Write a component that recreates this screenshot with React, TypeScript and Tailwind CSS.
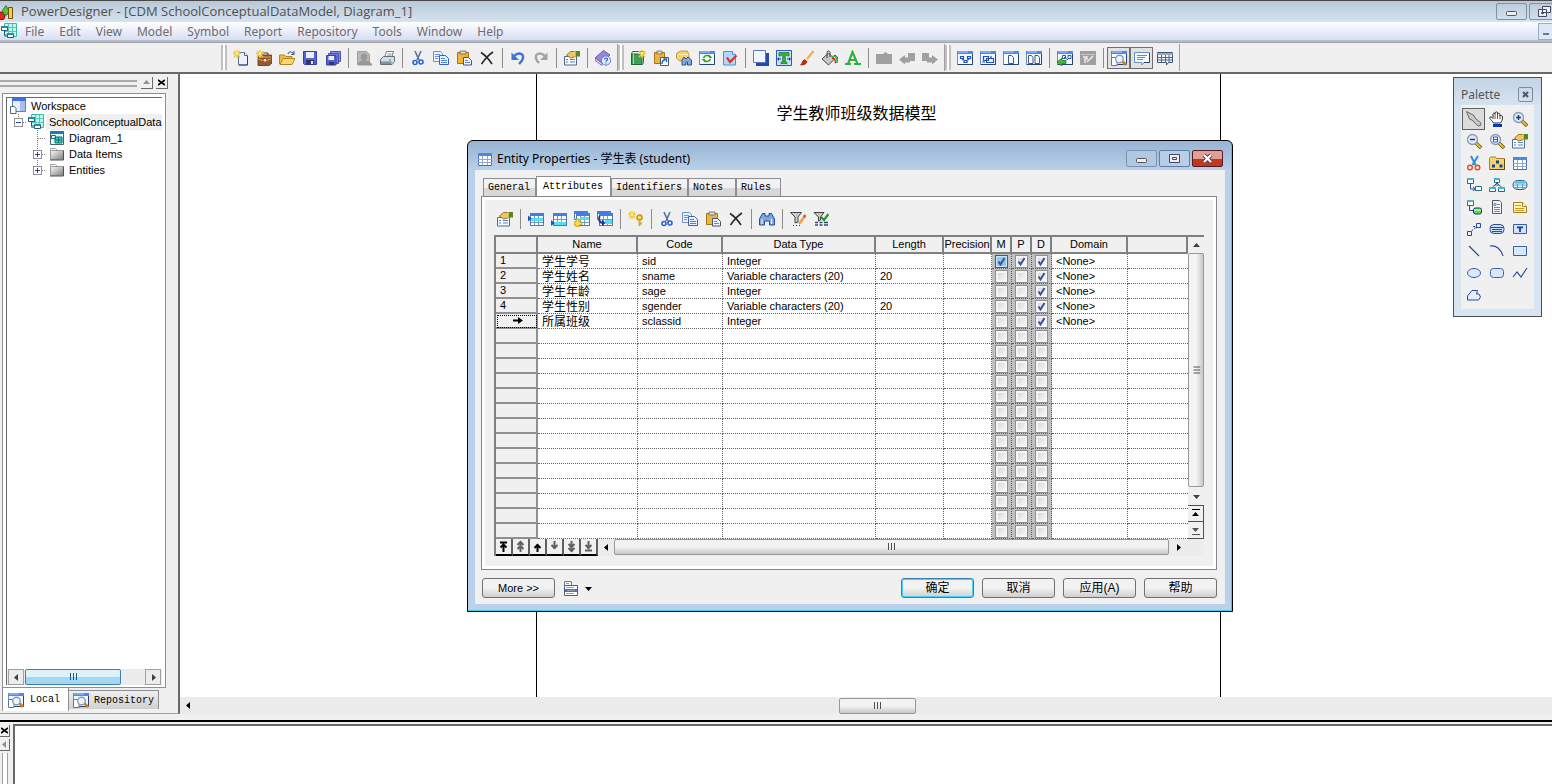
import { useState } from "react"
import type { ReactNode } from "react"

/* ---------- icons, all drawn on a 16 x 16 grid ---------- */

const spark = (
  <>
    <path d="M0 3.500h8M4 0v8M1 1l6 6M7 1L1 7" stroke="#f0cc38" strokeWidth="1.500" fill="none" />
    <path d="M3 2.500h2v2H3z" fill="#fff8c0" />
  </>
)
const win = (
  <>
    <rect x="0.5" y="1.5" width="15" height="13" fill="#f4f8ff" stroke="#6c8cc0" />
    <path d="M0 1h16v3H0z" fill="#4a8af0" />
    <path d="M1 2h10" stroke="#a8ccff" />
    <path d="M15.5 4v10.500H1" stroke="#26466e" fill="none" />
  </>
)
const grid = (
  <>
    <rect x="2.5" y="2.5" width="13" height="12" fill="#fff" stroke="#5576a8" />
    <path d="M2 2h14v3H2z" fill="#3f7fe0" />
    <path d="M3 8.5h12M3 11.5h12M6.5 5v9M10.5 5v9" stroke="#7d95b8" />
  </>
)
const lens = (
  <>
    <path d="M10 10l5 5" stroke="#5c4a10" strokeWidth="3.4" />
    <path d="M10 10l4.6 4.6" stroke="#f0c438" strokeWidth="2" />
    <circle cx="6.5" cy="6.5" r="5" fill="#dceafc" stroke="#8c98ac" strokeWidth="1.3" />
  </>
)
const page = (
  <>
    <path d="M5.5 2.5h6l3 3v9.500h-9z" fill="#eaf2ff" stroke="#5a74a0" />
    <path d="M11.5 2.5v3h3" stroke="#4a648c" fill="#fff" />
    <path d="M14.500 6v9H6" stroke="#2c4468" fill="none" />
  </>
)

const icons: Record<string, ReactNode> = {
  newFile: <>{page}{spark}</>,
  newProject: (
    <>
      <path d="M2 5h13.500l.5 8-3 2.500H2z" fill="#94592e" stroke="#5e3214" strokeWidth=".8" />
      <path d="M3 6h12v2H3z" fill="#b87848" />
      <path d="M2 9c4 2 9 2 13 0" stroke="#d8a070" fill="none" />
      <path d="M7 5V3h5v2" stroke="#5e3214" fill="none" />
      <path d="M8 9h2v2.500H8z" fill="#f8e0a8" />
      {spark}
    </>
  ),
  open: (
    <>
      <path d="M.5 14V5h5L7 6.500h6V9" fill="#f0b840" stroke="#b88420" />
      <path d="M1 14.500L4 8.500h12l-3 6z" fill="#ffd870" stroke="#b88420" />
      <path d="M9 4c1-3 4-3 5.500 0M12 4.500h3V1" stroke="#4a6c98" strokeWidth="1.200" fill="none" />
    </>
  ),
  save: (
    <>
      <path d="M1.500 1.500h13v13h-12l-1-1z" fill="#5a62d8" stroke="#3840a8" />
      <path d="M4 2h8v6H4z" fill="#e8f0ff" />
      <path d="M4 10h8v4.500H4z" fill="#30386a" />
      <path d="M9 11h2v3H9z" fill="#e8ecff" />
    </>
  ),
  saveAll: (
    <>
      <path d="M5.500 1.500h10v10h-10z" fill="#8a90e0" stroke="#4850b0" />
      <path d="M3.500 3.500h10v10h-10z" fill="#7078d8" stroke="#4850b0" />
      <path d="M1.500 5.500h9.500v9.500H1.500z" fill="#5a62d0" stroke="#3840a8" />
      <path d="M3.500 6h5.500v4H3.500z" fill="#e8f0ff" />
      <path d="M4 12h5v3H4z" fill="#30386a" />
    </>
  ),
  preview: (
    <>
      <path d="M1.500 1.500h9l3 3V14.500h-12z" fill="#b8b8b8" stroke="#a0a0a0" />
      <circle cx="8" cy="7" r="3.300" fill="#989898" />
      <path d="M2 14c1-3 4-4 6-4s5 1 8 4v1.500H2z" fill="#989898" />
    </>
  ),
  print: (
    <>
      <path d="M5.500 7.500l2-6h7l-2 6z" fill="#fff" stroke="#6a8098" />
      <path d="M8.500 4h4M8 6h4" stroke="#88a" />
      <path d="M1.500 9.500l3-3h11v5l-2.500 3H1.500z" fill="#d4dce4" stroke="#607080" />
      <path d="M2 11.500h10.500v2.500H2z" fill="#8090a8" />
      <path d="M10 9.500h2v1h-2z" fill="#30a030" />
    </>
  ),
  cut: (
    <>
      <path d="M5 1l4 9M11 1L7 10" stroke="#5c7498" strokeWidth="1.600" />
      <circle cx="5" cy="12.500" r="2" fill="none" stroke="#2860e0" strokeWidth="1.600" />
      <circle cx="11" cy="12" r="2" fill="none" stroke="#2860e0" strokeWidth="1.600" />
    </>
  ),
  copy: (
    <>
      <path d="M.5 1.500h7l2 2v8h-9z" fill="#eaf2ff" stroke="#6c90d0" />
      <path d="M2 4.500h5M2 6.500h6M2 8.500h3" stroke="#6c94e0" />
      <path d="M6.500 5.500h6l3 3v6h-9z" fill="#eaf2ff" stroke="#3a62b8" />
      <path d="M8 8.500h4M8 10.500h6M8 12.500h6" stroke="#5080e0" />
    </>
  ),
  paste: (
    <>
      <path d="M1.500 2.500h11v11h-11z" fill="#f0b438" stroke="#a87018" />
      <path d="M4 1h6v3H4z" fill="#d8d8d8" stroke="#686868" strokeWidth=".8" />
      <path d="M7.500 7.500h5l3 3v4.500h-8z" fill="#eef4ff" stroke="#40587c" />
      <path d="M9 10.500h3M9 12.500h5" stroke="#6888b8" />
    </>
  ),
  del: <path d="M2 2.500c5 3 8 7 11 11.500M14 2C9 5 6 9 2.500 14" stroke="#282828" strokeWidth="1.600" fill="none" />,
  undo: (
    <>
      <path d="M4 6c4-4 10-3 9 2-.5 3-3 5-4 6" stroke="#3c74d8" strokeWidth="2.400" fill="none" />
      <path d="M1.500 2.500v7.500H9z" fill="#3c74d8" />
    </>
  ),
  redo: (
    <>
      <path d="M12 6C8 2 2 3 3 8c.5 3 2 4 3 5" stroke="#a4a4a4" strokeWidth="2.400" fill="none" />
      <path d="M14.500 2.500V10H7z" fill="#a4a4a4" />
    </>
  ),
  props: (
    <>
      <path d="M.5 6.500h12v8.500H.5z" fill="#f6faff" stroke="#506c94" />
      <path d="M2 9.500h2M2 12h2M6 9.500h5M6 12h5" stroke="#5a84c8" />
      <path d="M2.500 5l4-3.500h5.500v5L6.500 8z" fill="#f4c460" stroke="#806010" strokeWidth=".8" />
      <path d="M11.500 1h4.500v5.500h-4.500z" fill="#5a8820" />
      <path d="M11 1v6" stroke="#f0e070" />
    </>
  ),
  help: (
    <>
      <path d="M0 8l8.500-7.500L15 5l-8 8z" fill="#9a86d8" stroke="#6c5cb8" />
      <path d="M0 8l7 5v2.500L0 10.500z" fill="#d8d0f0" stroke="#6450a8" strokeWidth=".7" />
      <circle cx="11" cy="10.500" r="4.600" fill="#e4eeff" stroke="#4a80d8" />
      <path d="M9.500 9.500c0-2 3-2 3 0 0 1-1.500 1-1.500 2M11 12.500v1" stroke="#2858b8" fill="none" strokeWidth="1.200" />
    </>
  ),
  book: (
    <>
      <path d="M1.500 3.500l1-2h11v11l-1 2h-11z" fill="#f0f4f0" stroke="#406048" />
      <path d="M1.500 4h10.500v10.500H1.500z" fill="#40a058" stroke="#206830" />
      <path d="M3.500 4v10" stroke="#a0d8a8" />
      <g transform="translate(8 0)">{spark}</g>
    </>
  ),
  pasteLink: (
    <>
      <path d="M1.500 2.500h10v11h-10z" fill="#f0b438" stroke="#a87018" />
      <path d="M4 1h5v3H4z" fill="#d8d8d8" stroke="#686868" strokeWidth=".8" />
      <path d="M7.500 7.500h8v8h-8z" fill="#fff" stroke="#40587c" />
      <path d="M9 14c0-3 1-4 3-4M10.500 9h3v3" stroke="#2858b8" fill="none" strokeWidth="1.400" />
    </>
  ),
  find: (
    <>
      <path d="M.5 3.500l4-2.500h7l1.500 4v6H3.500l-3-3z" fill="#f8d070" stroke="#b88828" strokeWidth=".8" />
      <path d="M3 4.500h9.500" stroke="#fff0b8" />
      <path d="M6 15V10l2-3 2 2 2-2 3.500 3v5h-4v-3h-1.500v3z" fill="#88a8e0" stroke="#30508c" />
    </>
  ),
  refresh: (
    <>
      {win}
      <path d="M4.500 8c1-3 5-3 6-1.500M11.500 9c-1 3-5 3-6 1.500" stroke="#3c9c18" strokeWidth="1.600" fill="none" />
      <path d="M10 4.500v3.500h3.500zM6 12.500V9H2.500z" fill="#3c9c18" />
    </>
  ),
  check: (
    <>
      <path d="M1.500 1.500h9l3 3v10.500h-12z" fill="#b0d8ff" stroke="#4c90e0" />
      <path d="M10.500 1.500v3h3" fill="#fff" stroke="#4c90e0" />
      <path d="M5 7.500l3 4.500 6.500-6.500" stroke="#d83028" strokeWidth="2.200" fill="none" />
    </>
  ),
  shadow: (
    <>
      <path d="M3 3h13v13H3z" fill="#2848a8" />
      <path d="M.5 .5h12v12H.5z" fill="#f0f6ff" stroke="#5878c0" />
    </>
  ),
  textFit: (
    <>
      <path d="M.5 .5h15v15H.5z" fill="#c8e0fc" stroke="#2858b8" />
      <path d="M3 2.500h10v3.500h-1.500L11 5H9.300v7H11v1.500H5V12h1.700V5H5l-.5 1H3z" fill="#30b838" stroke="#106018" strokeWidth=".6" />
      <path d="M1 9h4M2.500 7.500v3M11 9h4M13.500 7.500v3" stroke="#1840a0" />
    </>
  ),
  brush: (
    <>
      <path d="M14.500 1L8 9" stroke="#f0b040" strokeWidth="2.200" />
      <path d="M1.500 15c2-1 1-4 4-5.500l2.500 2C7 15 4 15 1.500 15z" fill="#d02818" stroke="#701008" strokeWidth=".6" />
    </>
  ),
  fill: (
    <>
      <path d="M0 9l6.500-6 6 6-6 6z" fill="#c8c8c8" stroke="#484848" />
      <path d="M5 8V2.500c0-2 3-2 3 0V7" stroke="#404040" fill="none" />
      <path d="M10 7c3-2 5 0 5 6" stroke="#30c030" strokeWidth="1.400" fill="none" />
      <path d="M10 8.300c2-.5 3.500 1 3.500 5" stroke="#e02020" strokeWidth="1.400" fill="none" />
      <path d="M12 5.500c3-.5 4 2 4 7" stroke="#2040e0" fill="none" />
    </>
  ),
  fontColor: <path d="M0 14h6M9 14h7M3 14L7.500 2 12.500 14M5 10h6" stroke="#30b040" strokeWidth="2.200" fill="none" />,
  greyFolder: <path d="M0 4h7l2.500-2L12 4h4v10H0z" fill="#a0a0a0" />,
  greyLeft: <path d="M0 9.500L6 5v2.500h3V3h7v8h-5v1.500H6v2z" fill="#a0a0a0" />,
  greyRight: <path d="M16 9.500L10 5v2.500H7V3H0v8h5v1.500h5v2z" fill="#a0a0a0" />,
  winLink: (
    <>
      {win}
      <path d="M3.500 6.500h3v2h-3zM10.500 6.500h3v2h-3zM7 10.500h3v2H7zM5 9l3 2M12 9l-3 2" fill="none" stroke="#2050b8" strokeWidth="1.200" />
    </>
  ),
  winGroup: (
    <>
      {win}
      <path d="M3.500 6.500h5v4h-5zM6.500 8.500h7v4h-7zM11 6v2M2 12h3" fill="none" stroke="#2050b8" strokeWidth="1.200" />
    </>
  ),
  winPage: <>{win}<path d="M5.500 5.500h3l2 2v6h-5z" fill="#f4f8ff" stroke="#40587c" /></>,
  winPages: (
    <>
      {win}
      <path d="M2.500 5.500h3l1.500 2v6H2.500zM9 5.500h3l1.500 2v6H9z" fill="#f4f8ff" stroke="#40587c" />
    </>
  ),
  winBack: (
    <>
      {win}
      <path d="M5.500 5.500h3v3h-3zM11 5.500h3v3h-3zM7 7l4 3" fill="none" stroke="#2858b8" />
      <path d="M0 12l5-4v2.500h4v3H5V16z" fill="#40c030" stroke="#187010" strokeWidth=".7" />
    </>
  ),
  greyWin: (
    <>
      <path d="M0 1h16v14H0z" fill="#a0a0a0" />
      <path d="M1 4.500h14" stroke="#c8c8c8" />
      <path d="M3 7h4v2H5v4M13 6l-6 6" stroke="#f0f0f0" strokeWidth="1.400" fill="none" />
    </>
  ),
  browse: (
    <>
      {win}
      <path d="M.5 7.500h4l1.500 2v6H.5z" fill="#fff" stroke="#5878a8" />
      <path d="M11 11l4 4" stroke="#d08020" strokeWidth="2.800" />
      <circle cx="8.500" cy="9" r="3.800" fill="#eef4fc" stroke="#8c9cb4" strokeWidth="1.400" />
    </>
  ),
  output: (
    <>
      <path d="M.5 2.500h15v10H10l-2 2.500v-2.500H.5z" fill="#f4f8ff" stroke="#6c8cc0" />
      <path d="M3 5.500h10M3 7.500h8M3 9.500h6" stroke="#6888c0" />
      <path d="M15.500 3v9.500H10" stroke="#26466e" fill="none" />
    </>
  ),
  results: (
    <>
      <path d="M.5 2.500h15v10h-4l-2 2.500v-2.500H.5z" fill="#f0f4fc" stroke="#40587c" />
      <path d="M.5 3h15v2H.5z" fill="#a0a8b8" />
      <path d="M1 7.500h14M1 10h14M4.500 5v8M8.500 5v8M12 5v8" stroke="#586880" />
    </>
  ),
  insertRow: <>{grid}<path d="M3 7h12v3H3z" fill="#50e0f0" /><path d="M0 4.500v6l3.500-3z" fill="#2050c0" /></>,
  addRow: <>{grid}<path d="M3 11h12v3H3z" fill="#50e0f0" /><path d="M0 9v6l3.500-3z" fill="#2050c0" /></>,
  addItem: (
    <>
      <path d="M.5 .5h13v8H.5z" fill="#fff" stroke="#5576a8" />
      <path d="M0 0h14v3H0z" fill="#3f7fe0" />
      {grid}
      <path d="M6 6h9v3H6z" fill="#50e0f0" />
      <path d="M2 8h3v3h3v3H5v2H2v-2H0v-3h2z" fill="#f8e050" stroke="#a08010" strokeWidth=".6" />
    </>
  ),
  reuse: (
    <>
      <path d="M.5 .5h13v8H.5z" fill="#fff" stroke="#5576a8" />
      <path d="M0 0h14v3H0z" fill="#3f7fe0" />
      {grid}
      <path d="M8 9h7v4H8z" fill="#50e0f0" />
      <path d="M3 5C1 7 2 11 5 12" stroke="#183c98" strokeWidth="2" fill="none" />
      <path d="M5 8.500v6.500l3.500-3z" fill="#183c98" />
    </>
  ),
  key: (
    <>
      {spark}
      <circle cx="11.500" cy="6.500" r="2.600" fill="#ffd850" stroke="#c08c10" strokeWidth="1.300" />
      <path d="M11.500 9.500V15M11.500 12.500h2.500" stroke="#e0a820" strokeWidth="2" />
    </>
  ),
  binoculars: (
    <>
      <path d="M.5 14V8l3-5.500H6V5h4V2.500h2.500l3 5.500v6h-5v-4h-5v4z" fill="#80a4e0" stroke="#284c90" />
      <path d="M3 8v5M12.500 8v5" stroke="#e8f0ff" strokeWidth="1.200" />
    </>
  ),
  filterEdit: (
    <>
      <path d="M.5 1.500h11L8 6v5l-3 1V6z" fill="#c8c8c8" stroke="#484848" />
      <path d="M15 5l-6 8" stroke="#f0a040" strokeWidth="2.600" />
      <path d="M15.500 4l-1.500 2" stroke="#c05030" strokeWidth="2.400" />
      <path d="M3 14.500h1M6 14.500h1M9 14.500h1" stroke="#303030" />
    </>
  ),
  filterOn: (
    <>
      <path d="M1 1.500h10L7.500 6v3L5.500 10V6z" fill="#c8c8c8" stroke="#404040" />
      <path d="M8 6l3 3 4.500-6" stroke="#20a028" strokeWidth="2.400" fill="none" />
      <path d="M2 11.500h3M6.500 11.500h3M11 11.500h4M2 14h3M6.500 14h3M11 14h4" stroke="#304878" strokeWidth="1.400" />
    </>
  ),
  pointer: <path d="M.5 .5l3 7.500 2.500 1 6 6 2.500-.5.5-2.500-6-5-1-2.500z" fill="#c8c8c8" stroke="#686868" />,
  hand: (
    <>
      <path d="M4.500 12C3 9 0 8 1 6c1.500-.5 2.500 1 3 1.500L4 3c.5-1.500 2-1 2 0V2c.5-1.500 2.500-1.500 2.500 0v1c1-1.500 2.500-.5 2.500 1v1c1-1 2.500-.5 2.500 1 0 3-.5 4-2 6z" fill="#fff" stroke="#303030" />
      <path d="M6 3v5M8.500 3v5M11 4v4" stroke="#303030" strokeWidth=".8" />
      <path d="M4 13h9v3H4z" fill="#0838c0" />
    </>
  ),
  zoomIn: <>{lens}<path d="M4 6.500h5M6.500 4v5" stroke="#203c78" strokeWidth="1.500" /></>,
  zoomOut: <>{lens}<path d="M4 6.500h5" stroke="#203c78" strokeWidth="1.500" /></>,
  zoomPage: <>{lens}<path d="M4.500 4h4v5h-4zM4.500 6.500h4" stroke="#2858e0" fill="#fff" /></>,
  scissors: (
    <>
      <path d="M5 1l4.500 9M12 1L6.500 10" stroke="#2890d8" strokeWidth="2" />
      <circle cx="4" cy="12.500" r="2.300" fill="none" stroke="#e84820" strokeWidth="1.400" />
      <circle cx="11.500" cy="12.500" r="2.300" fill="none" stroke="#e84820" strokeWidth="1.400" />
    </>
  ),
  pkg: (
    <>
      <path d="M.5 3.500l1-1.500h5l1 1.500h8v11H.5z" fill="#f8d468" stroke="#a88028" />
      <path d="M15.500 4v10.500H1" stroke="#604808" fill="none" />
      <path d="M7 5.500h3v3H7zM3 9.500h3v3H3zM10.500 9.500h3v3h-3z" fill="#183ca0" />
    </>
  ),
  entity: (
    <>
      <path d="M1.500 2.500h13v12h-13z" fill="#fff" stroke="#4c6cb0" />
      <path d="M1 2h14v3H1z" fill="#4c88e0" />
      <path d="M1 8.500h14M1 11.500h14M5.500 5v9M10.500 5v9" stroke="#90a8d0" />
    </>
  ),
  relation: (
    <>
      <path d="M1.500 1.500h6v5h-6zM9.500 9.500h6v4h-6z" fill="#fff" stroke="#306878" />
      <path d="M1 1h7v2H1z" fill="#40b8c8" />
      <path d="M4.500 7v5H9M7 10l2.500 2L7 14" stroke="#2c4ca0" fill="none" />
    </>
  ),
  inherit: (
    <>
      <path d="M5.500 1.500h5v4h-5zM.5 10.500h6v4h-6zM9.500 10.500h6v4h-6z" fill="#fff" stroke="#306878" />
      <path d="M5 1h6v2H5zM0 10h7v2H0zM9 10h7v2H9z" fill="#40b8c8" />
      <path d="M8 6l-2 2h4zM3.500 10L6 8M12.500 10L10 8" stroke="#2c4ca0" fill="none" />
    </>
  ),
  assoc: (
    <>
      <rect x="1" y="3.500" width="14" height="9" rx="4.500" fill="#e8fcff" stroke="#2c4c98" />
      <path d="M1 8h14M1.500 10.500h13M5.500 7v5M10.500 7v5" stroke="#5888a8" strokeWidth=".8" />
      <path d="M3 5.500h10" stroke="#38d0e0" strokeWidth="2.400" />
    </>
  ),
  assocLink: (
    <>
      <path d="M1.500 1.500h6v5h-6z" fill="#fff" stroke="#306878" />
      <path d="M1 1h7v2H1z" fill="#40b8c8" />
      <path d="M3.500 7v4.500H7" stroke="#2c4ca0" fill="none" />
      <rect x="7.500" y="9" width="8" height="6" rx="2" fill="#50e040" stroke="#183878" />
      <path d="M8 11h7" stroke="#fff" />
    </>
  ),
  file: (
    <>
      <path d="M3.500 1.500h7l2 2v11h-9z" fill="#f4f6fa" stroke="#505c70" />
      <path d="M5 4.500h2v2H5zM8 5.500h3M5 8.500h6M5 10.500h6M5 12.500h6" stroke="#7888a0" fill="none" />
    </>
  ),
  note: (
    <>
      <path d="M1.500 3.500h9l4 4v6h-13z" fill="#fff4b8" stroke="#a88018" />
      <path d="M10.500 3.500v4h4" fill="#fff" stroke="#a88018" />
      <path d="M3 6.500h6M3 9.500h9M3 11.500h9" stroke="#d09828" />
    </>
  ),
  link: (
    <>
      <path d="M1.500 10.500h4v4h-4zM10.500 2.500h4v4h-4z" fill="#e4f0ff" stroke="#2c4ca0" />
      <path d="M5.500 10l4-3.500M7 5.500h3v3" stroke="#2c4ca0" strokeDasharray="2 1" fill="none" />
    </>
  ),
  title: (
    <>
      <rect x="1" y="3.500" width="14" height="9" rx="4" fill="#c8dcf8" stroke="#2c4ca0" />
      <path d="M1 6.500h14M3 8.500h10M3 10.500h10" stroke="#2c4ca0" />
    </>
  ),
  text: (
    <>
      <path d="M1.500 3.500h13v9h-13z" fill="#d4e4ff" stroke="#3c5ca8" />
      <path d="M5 6.300h6M8 6v5" stroke="#183c98" strokeWidth="1.800" />
    </>
  ),
  line: <path d="M3 3l10 10" stroke="#2c4898" strokeWidth="1.200" />,
  arc: <path d="M1 3c6-1 11 3 13 10" stroke="#2c4898" strokeWidth="1.200" fill="none" />,
  rect: <path d="M1.500 3.500h13v9h-13z" fill="#d8e8ff" stroke="#3c5ca8" />,
  ellipse: <ellipse cx="8" cy="8" rx="6.500" ry="4.500" fill="#d8e8ff" stroke="#3c5ca8" />,
  roundRect: <rect x="1.500" y="3.500" width="13" height="9" rx="3" fill="#d8e8ff" stroke="#3c5ca8" />,
  polyline: <path d="M1 12l4-5 4 5 6-9" stroke="#2c4898" strokeWidth="1.200" fill="none" />,
  polygon: <path d="M1.500 13V9L6 3.500h5.500l-1 3.500h2.500l1.500 3-2 3z" fill="#e4eeff" stroke="#2c4898" />,
  workspace: (
    <>
      <path d="M2.500 .5h13v13h-13z" fill="#e8f0ff" stroke="#6080c0" />
      <path d="M2 0h14v3H2z" fill="#4070e0" />
      <path d="M10 3h5v10h-5z" fill="#a8c0f0" />
      <path d="M.5 8.500h4l1.500 2v5H.5z" fill="#fff" stroke="#506888" />
    </>
  ),
  model: (
    <>
      <path d="M3.500 .5h12v13h-12z" fill="#c8f4ec" stroke="#40b8a8" />
      <path d="M7.500 1v12M11.500 1v12M4 4.500h11M4 8.500h11" stroke="#58c8b8" />
      <path d="M.5 3.500h6v4h-6zM6.500 10.500h6v4h-6z" fill="#fff" stroke="#205878" />
      <path d="M0 3h7v2H0zM6 10h7v2H6z" fill="#2888b0" />
      <path d="M3.500 8v4H6" stroke="#205878" fill="none" />
    </>
  ),
  diagram: (
    <>
      <path d="M1.500 1.500h13v13h-13z" fill="#e0fcf8" stroke="#506070" />
      <path d="M1 1h14v3H1z" fill="#2878b0" />
      <path d="M6 7h7v6H6z" fill="#38d0c8" stroke="#107070" />
      <path d="M2.500 5.500h4v3h-4zM9.500 7v6M6 10h7" stroke="#107070" fill="none" />
    </>
  ),
  folder: (
    <>
      <path d="M1.500 4V2.500h5L8 4" fill="#fff" stroke="#a0a0a0" />
      <path d="M1.500 4.500h13v9h-13z" fill="url(#folderGrey)" stroke="#999" />
      <path d="M14.500 4.500v9.500H1" stroke="#505050" fill="none" />
    </>
  ),
  logo: (
    <>
      <circle cx="1" cy="12" r="4" fill="#e02818" stroke="#801008" />
      <path d="M2 7l4-5.500L9 7l-2 4H5z" fill="#58c040" stroke="#206010" strokeWidth=".7" />
      <path d="M8.500 3.500h4v11h-4z" fill="#f8d030" stroke="#705010" />
    </>
  ),
  menuList: (
    <>
      <path d="M1.500 1.500h7v4h-7z" fill="#f4f4f4" stroke="#708090" />
      <path d="M1.500 5.500h13v10h-13z" fill="#fff" stroke="#506078" />
      <path d="M2 9h12v3H2z" fill="#5068e0" />
      <path d="M3 3.500h3M3 7.500h8M4 10.500h8M3 13.500h8" stroke="#98a0b0" />
    </>
  ),
}

function Icon({ name, className = "size-4" }: { name: string; className?: string }) {
  return (
    <svg viewBox="0 0 16 16" className={`shrink-0 ${className}`} aria-hidden="true">
      {icons[name]}
    </svg>
  )
}

const palette = [
  "pointer", "hand", "zoomIn",
  "zoomOut", "zoomPage", "props",
  "scissors", "pkg", "entity",
  "relation", "inherit", "assoc",
  "assocLink", "file", "note",
  "link", "title", "text",
  "line", "arc", "rect",
  "ellipse", "roundRect", "polyline",
  "polygon",
]

// "|" is a separator
const toolbars = [
  ["newFile", "newProject", "open", "save", "saveAll", "|", "preview", "print", "|", "cut", "copy", "paste", "del", "|", "undo", "redo", "|", "props", "|", "help"],
  ["book", "pasteLink", "find", "refresh", "check", "|", "shadow", "textFit", "brush", "fill", "fontColor", "|", "greyFolder", "greyLeft", "greyRight"],
  ["winLink", "winGroup", "winPage", "winPages", "|", "winBack", "greyWin", "|", "browse", "output", "results"],
]
const gridTools = ["props", "|", "insertRow", "addRow", "addItem", "reuse", "|", "key", "|", "cut", "copy", "paste", "del", "|", "binoculars", "|", "filterEdit", "filterOn"]
const pressed = ["browse", "output"]

const menus = ["File", "Edit", "View", "Model", "Symbol", "Report", "Repository", "Tools", "Window", "Help"]
const tabs = ["General", "Attributes", "Identifiers", "Notes", "Rules"]

interface Attribute {
  name: string
  code: string
  type: string
  length?: string
  m?: boolean
  p?: boolean
}

const attributes: Attribute[] = [
  { name: "学生学号", code: "sid", type: "Integer", m: true, p: true },
  { name: "学生姓名", code: "sname", type: "Variable characters (20)", length: "20" },
  { name: "学生年龄", code: "sage", type: "Integer" },
  { name: "学生性别", code: "sgender", type: "Variable characters (20)", length: "20" },
  { name: "所属班级", code: "sclassid", type: "Integer" },
]
const ROWS = 19

function Tools({ items }: { items: string[] }) {
  return (
    <>
      {items.map((t, i) =>
        t === "|" ? (
          <span key={i} className="flex w-2 justify-center">
            <span className="h-5 w-px bg-[#8c8c8c]" />
          </span>
        ) : (
          <button
            key={i}
            type="button"
            aria-label={t}
            className={`flex h-[22px] w-[23px] items-center justify-center ${pressed.includes(t) ? "border border-[#707070] bg-[#e2e2e2]" : ""}`}
          >
            <Icon name={t} />
          </button>
        )
      )}
    </>
  )
}

function Arrow({ dir, className = "size-[9px]" }: { dir: "up" | "down" | "left" | "right"; className?: string }) {
  const d = {
    up: "M1 6h7L4.500 2z",
    down: "M1 3h7L4.500 7z",
    left: "M6 1v7L2 4.500z",
    right: "M3 1v7l4-3.500z",
  }[dir]
  return (
    <svg viewBox="0 0 9 9" className={`shrink-0 ${className}`} fill="currentColor" aria-hidden="true">
      <path d={d} />
    </svg>
  )
}

function Grip({ vertical = false }: { vertical?: boolean }) {
  return (
    <svg viewBox="0 0 9 8" className={`h-2 w-[9px] ${vertical ? "rotate-90" : ""}`} stroke="currentColor" aria-hidden="true">
      <path d="M1.500 0v7M4.500 0v7M7.500 0v7" />
    </svg>
  )
}

function Tick({ label, on = false, hot = false }: { label: string; on?: boolean; hot?: boolean }) {
  const [checked, setChecked] = useState(on)
  return (
    <span className="relative mx-auto block size-[13px]">
      <input
        type="checkbox"
        aria-label={label}
        checked={checked}
        onChange={() => setChecked(!checked)}
        className={`block size-[13px] appearance-none border ${hot ? "border-[#2c628b] bg-[#8ccbf0]" : "border-[#8e8f8f] bg-linear-to-br from-[#cdd0d8] to-white"} ${hot ? "shadow-[inset_0_0_0_1px_#c8e8fa]" : "shadow-[inset_0_0_0_2px_#f4f4f4]"}`}
      />
      {checked && (
        <svg viewBox="0 0 13 13" className="pointer-events-none absolute inset-0 size-[13px]" aria-hidden="true">
          <path d="M3.500 6.500L5.500 9.500 9.500 3" stroke="#3c5098" strokeWidth="2" fill="none" />
        </svg>
      )}
    </span>
  )
}

function Branch({ box, end = false, root = false }: { box?: "+" | "-"; end?: boolean; root?: boolean }) {
  return (
    <svg viewBox="0 0 16 16" className="size-4 shrink-0" aria-hidden="true">
      <path d={`M8.500 0V${end || root ? 8 : 16}M9 8.500h7`} stroke="#808080" strokeDasharray="1 1" fill="none" />
      {box && (
        <>
          <rect x="4.500" y="4.500" width="8" height="8" fill="#fff" stroke="#909090" />
          <path d={box === "+" ? "M6 8.500h5M8.500 6v5" : "M6 8.500h5"} stroke="#2c4898" />
        </>
      )}
    </svg>
  )
}

function WindowButton({ kind, className }: { kind: "min" | "max" | "restore" | "close"; className: string }) {
  return (
    <button type="button" aria-label={kind} className={`flex h-[17px] w-[31px] shrink-0 items-center justify-center rounded-xs border ${className}`}>
      <svg viewBox="0 0 13 11" className="h-[11px] w-[13px]" fill="none" aria-hidden="true">
        {kind === "min" && <rect x="1.500" y="5.500" width="10" height="4" rx="1" fill="#eee" stroke="#555" />}
        {kind === "max" && <path d="M1.500 1.500h10v8h-10zM4.500 4.500h4v2h-4z" fill="#eee" stroke="#444860" />}
        {kind === "restore" && <path d="M4.500 .5h8v6h-8zM.5 3.500h8v7h-8zM3.500 6.500h2v1h-2z" fill="#eee" stroke="#444860" />}
        {kind === "close" && (
          <>
            <path d="M3 2l7 7M10 2L3 9" stroke="#504050" strokeWidth="4" />
            <path d="M3 2l7 7M10 2L3 9" stroke="#fff" strokeWidth="2.200" />
          </>
        )}
      </svg>
    </button>
  )
}

function WorkspaceTree() {
  const row = "flex h-4 items-center whitespace-nowrap"
  return (
    <aside className="mb-[6px] flex w-[180px] shrink-0 flex-col border-r-2 border-b border-r-[#696969] border-b-[#a0a0a0] pt-[3px]">
      <div className="flex h-3 items-center gap-[3px] pr-[10px]">
        <span className="mr-px h-[7px] flex-1 border-y-2 border-[#a8a8a8]" />
        <button type="button" aria-label="Collapse" className="flex size-3 items-center justify-center border-r border-b border-[#696969] text-[#909090]">
          <Arrow dir="up" />
        </button>
        <button type="button" aria-label="Close" className="flex size-3 items-center justify-center border-r border-b border-[#696969]">
          <svg viewBox="0 0 7 7" className="size-[7px]" aria-hidden="true"><path d="M0 1l7 5M7 1L0 6" stroke="#000" strokeWidth="1.800" /></svg>
        </button>
      </div>
      <div className="mt-1 mr-3 ml-[2px] flex flex-1 flex-col border border-[#8c8e94] bg-white p-[3px] pb-[2px]">
        <div className="flex flex-1 flex-col overflow-hidden border-t border-l border-[#696969]">
          <div className="flex-1 text-[11px]">
            <div className={`${row} gap-[5px] pl-[3px]`}><Icon name="workspace" />Workspace</div>
            <div className={`${row} pl-[3px]`}>
              <Branch box="-" root />
              <Icon name="model" className="mx-[2px] size-4" />
              <span className="flex-1 bg-[#f0f0f0] pl-[3px]">SchoolConceptualDataModel</span>
            </div>
            <div className={`${row} gap-1 pl-[22px]`}><Branch /><Icon name="diagram" />Diagram_1</div>
            <div className={`${row} gap-1 pl-[22px]`}><Branch box="+" /><Icon name="folder" />Data Items</div>
            <div className={`${row} gap-1 pl-[22px]`}><Branch box="+" end /><Icon name="folder" />Entities</div>
          </div>
          <div className="flex h-4 items-center gap-px bg-[#ececec] px-px">
            <button type="button" aria-label="Scroll left" className="flex size-4 items-center justify-center border border-[#a0a0a0] bg-[#ececec] text-[#404040]"><Arrow dir="left" /></button>
            <span className="flex h-4 w-24 items-center justify-center rounded-xs border border-[#3c7fb1] bg-linear-to-b from-[#dff2fc] from-50% to-[#a4d8f2] to-50% text-[#1c5a80]"><Grip /></span>
            <button type="button" aria-label="Scroll right" className="ml-auto flex size-4 items-center justify-center border border-[#a0a0a0] bg-[#ececec] text-[#404040]"><Arrow dir="right" /></button>
          </div>
        </div>
      </div>
      <div className="flex items-start pb-[2px] pl-[2px] font-['Liberation_Mono',monospace] text-[10px]">
        <button type="button" className="flex h-[23px] w-[67px] items-center gap-[6px] border-r border-l border-[#8c8e94] bg-white pl-[5px]"><Icon name="browse" />Local</button>
        <button type="button" className="mt-[2px] flex h-[19px] w-[90px] items-center gap-[5px] border-t border-r border-[#8c8e94] bg-linear-to-b from-[#f0f0f0] to-[#d0d0d0] pl-1"><Icon name="browse" />Repository</button>
      </div>
    </aside>
  )
}

function Palette() {
  return (
    <div className="absolute top-[3px] right-[10px] w-[89px] border border-[#505050] bg-linear-to-b from-[#c4d4e4] to-[#d7e4f2] to-[30px] px-[7px] pt-[6px] pb-[7px]">
      <div className="flex h-[21px] items-center justify-between pr-px font-['Noto_Sans',sans-serif] text-[12px] text-[#555]">
        Palette
        <button type="button" aria-label="Close palette" className="flex size-[15px] items-center justify-center rounded-xs border border-[#808898]">
          <svg viewBox="0 0 7 7" className="size-[7px]" aria-hidden="true"><path d="M1 1l5 5M6 1L1 6" stroke="#505868" strokeWidth="2" /></svg>
        </button>
      </div>
      <div className="grid h-[204px] grid-cols-[repeat(3,23px)] content-start bg-[#f0f0f0] pt-[3px] pl-px">
        {palette.map(p => (
          <button key={p} type="button" aria-label={p} className={`flex h-[22px] w-[23px] items-center justify-center ${p === "pointer" ? "border border-[#606060] bg-[#dcdcdc]" : ""}`}>
            <Icon name={p} />
          </button>
        ))}
      </div>
    </div>
  )
}

function AttributesGrid() {
  const th = "h-[17px] border-r-2 border-b-2 border-[#808080] bg-[#f0f0f0] p-0 font-normal leading-[15px] whitespace-nowrap"
  const td = "h-[15px] border-r border-b border-dotted border-[#606060] p-0 pl-1 whitespace-nowrap leading-[14px]"
  const tick = "h-[15px] border-r border-b border-dotted border-[#606060] bg-[#c0c0c0] p-0 leading-[0px]"
  const nav = [
    { label: "First", d: "M3 2.500h7M6.500 4v8M3.500 7.500l3-3 3 3", off: false },
    { label: "Page up", d: "M6.500 1v11M3.500 5l3-3 3 3M3.500 9l3-3 3 3", off: true },
    { label: "Up", d: "M6.500 4v8M3.500 8l3-3 3 3", off: false },
    { label: "Down", d: "M6.500 1v8M3.500 5l3 3 3-3", off: true },
    { label: "Page down", d: "M6.500 1v11M3.500 4l3 3 3-3M3.500 8l3 3 3-3", off: true },
    { label: "Last", d: "M3 10.500h7M6.500 1v8M3.500 5l3 3 3-3", off: true },
  ]
  return (
    <div className="border-t-2 border-l-2 border-[#808080] bg-white">
      <div className="flex">
        <table className="flex-1 table-fixed border-separate border-spacing-0 text-[11px]">
          <colgroup>
            <col className="w-[42px]" /><col className="w-[100px]" /><col className="w-[85px]" /><col className="w-[153px]" />
            <col className="w-[68px]" /><col className="w-[48px]" /><col className="w-5" /><col className="w-5" /><col className="w-5" />
            <col className="w-[76px]" /><col />
          </colgroup>
          <thead>
            <tr>
              {["", "Name", "Code", "Data Type", "Length", "Precision", "M", "P", "D", "Domain"].map((h, i) => (
                <th key={i} className={th}>{h}</th>
              ))}
              <th className={`${th} border-r-0`} />
            </tr>
          </thead>
          <tbody>
            {Array.from({ length: ROWS }, (_, i) => {
              const a = attributes[i]
              return (
                <tr key={i}>
                  <th className={`h-[15px] border-r-2 border-b-2 border-[#909090] bg-[#f0f0f0] p-0 pl-1 text-left font-normal leading-[13px] ${i === 4 ? "outline-1 -outline-offset-2 outline-dotted outline-black" : ""}`}>
                    {i === 4 ? (
                      <svg viewBox="0 0 10 9" className="mx-auto h-[9px] w-[10px]" aria-label="Current row"><path d="M0 3.500h5V1l5 3.500L5 8V5.500H0z" /></svg>
                    ) : a ? i + 1 : null}
                  </th>
                  <td className={`${td} font-['Noto_Sans_CJK_SC',sans-serif] text-[12px]`}>{a?.name}</td>
                  <td className={td}>{a?.code}</td>
                  <td className={td}>{a?.type}</td>
                  <td className={td}>{a?.length}</td>
                  <td className={td} />
                  <td className={tick}><Tick label={`Mandatory ${i + 1}`} on={a?.m} hot={i === 0} /></td>
                  <td className={tick}><Tick label={`Primary ${i + 1}`} on={a?.p} /></td>
                  <td className={tick}><Tick label={`Displayed ${i + 1}`} on={!!a} /></td>
                  <td className={td}>{a ? "<None>" : null}</td>
                  <td className={`${td} border-r-0`} />
                </tr>
              )
            })}
          </tbody>
        </table>
        <div className="flex w-4 flex-col items-center bg-[#f0f0f0] text-[#404040]">
          <button type="button" aria-label="Scroll up" className="flex h-4 w-full items-center justify-center"><Arrow dir="up" /></button>
          <span className="flex w-full flex-1 items-center justify-center rounded-xs border border-[#989898] bg-linear-to-r from-[#f4f4f4] from-50% to-[#c8c8ca] text-[#505050]"><Grip vertical /></span>
          <button type="button" aria-label="Scroll down" className="flex h-[18px] w-full items-center justify-center"><Arrow dir="down" /></button>
          <button type="button" aria-label="Top" className="flex h-[17px] w-full flex-col items-center justify-center border-t border-r border-b border-[#505050] text-black"><span className="h-px w-2 bg-black" /><Arrow dir="up" /></button>
          <button type="button" aria-label="Bottom" className="flex h-[17px] w-full flex-col items-center justify-center border-r border-b border-[#505050] text-[#555]"><Arrow dir="down" /><span className="h-px w-2 bg-[#555]" /></button>
        </div>
      </div>
      <div className="flex h-[17px] bg-[#ececec]">
        {nav.map(n => (
          <button key={n.label} type="button" aria-label={n.label} className="flex w-[17px] items-center justify-center border-r-2 border-b-2 border-r-[#606060] border-b-black bg-[#f0f0f0]">
            <svg viewBox="0 0 13 13" className="size-[13px]" fill="none" stroke={n.off ? "#606060" : "#000"} strokeWidth="2" aria-hidden="true"><path d={n.d} /></svg>
          </button>
        ))}
        <button type="button" aria-label="Scroll left" className="flex w-4 items-center justify-center"><Arrow dir="left" /></button>
        <span className="flex h-4 flex-1 items-center justify-center rounded-xs border border-[#989898] bg-linear-to-b from-[#f2f2f2] from-50% to-[#c8c8ca] text-[#505050]"><Grip /></span>
        <button type="button" aria-label="Scroll right" className="mr-4 flex w-[19px] items-center justify-center"><Arrow dir="right" /></button>
      </div>
    </div>
  )
}

function EntityDialog() {
  const [tab, setTab] = useState("Attributes")
  const button = "h-5 rounded-[3px] border bg-linear-to-b from-[#f2f2f2] from-50% to-[#cfcfcf] text-center"
  const tabWidths: Record<string, string> = {
    General: "w-[53px]",
    Attributes: "w-[75px]",
    Identifiers: "w-[77px]",
    Notes: "w-[48px]",
    Rules: "w-[45px]",
  }
  return (
    <section className="absolute top-[66px] left-[287px] w-[766px] rounded-t-md border border-black bg-linear-to-b from-[#98b4d3] to-[#b9d1ea] to-[30px] px-[7px] pb-[7px] shadow-[inset_-1px_-1px_0_#30d0e8]">
      <header className="flex h-[29px] items-start gap-[2px] pt-[9px] pl-[2px]">
        <h2 className="flex flex-1 items-center gap-1 pt-px font-['Noto_Sans','Noto_Sans_CJK_SC',sans-serif] text-[12px] leading-4">
          <Icon name="entity" />
          Entity Properties - 学生表 (student)
        </h2>
        <WindowButton kind="min" className="border-[#7a93b4] bg-[#b0c8e2]" />
        <WindowButton kind="max" className="border-[#5f7da4] bg-[#b8cee6]" />
        <WindowButton kind="close" className="mr-[2px] border-[#5a1820] bg-linear-to-b from-[#e0a098] from-50% to-[#c03820] to-50%" />
      </header>
      <div className="bg-[#f0f0f0] pt-[6px] pr-2 pb-[6px] pl-[6px]">
        <div role="tablist" className="flex h-5 items-end pl-[2px] font-['Liberation_Mono',monospace] text-[10px]">
          {tabs.map(t => (
            <button
              key={t}
              type="button"
              role="tab"
              aria-selected={t === tab}
              onClick={() => setTab(t)}
              className={`border-t border-r border-l border-[#8c8e94] text-left ${tabWidths[t]} ${t === tab ? "h-5 bg-white pl-[6px]" : "h-[18px] bg-linear-to-b from-[#f2f2f2] from-50% to-[#d8d8d8] to-50% pl-1"}`}
            >
              {t}
            </button>
          ))}
        </div>
        <div className="border border-[#828790] bg-white p-[3px]">
          <div className="bg-[#f0f0f0] px-[9px] pb-[10px]">
            <div className="-ml-px flex h-[35px] items-center pt-[3px]"><Tools items={gridTools} /></div>
            <AttributesGrid />
          </div>
        </div>
        <div className="mt-2 flex items-center gap-2 pl-px font-['Liberation_Sans','Noto_Sans_CJK_SC',sans-serif] text-[12px] leading-[18px]">
          <button type="button" className={`${button} w-[73px] border-[#707070] text-[11px]`}>More &gt;&gt;</button>
          <button type="button" aria-label="Menu" className="mr-auto flex items-center gap-[5px]"><Icon name="menuList" /><Arrow dir="down" className="size-[9px]" /></button>
          <button type="button" className={`${button} w-[73px] border-[#3c7fb1] shadow-[inset_0_0_0_1px_#48d0f8]`}>确定</button>
          <button type="button" className={`${button} w-[73px] border-[#707070]`}>取消</button>
          <button type="button" className={`${button} w-[73px] border-[#707070]`}>应用(A)</button>
          <button type="button" className={`${button} w-[73px] border-[#707070]`}>帮助</button>
        </div>
      </div>
    </section>
  )
}

export default function App() {
  return (
    <div className="flex h-screen flex-col overflow-hidden bg-[#f0f0f0] font-['Liberation_Sans','Noto_Sans_CJK_SC',sans-serif] text-[11px] text-black">
      <svg className="absolute size-0" aria-hidden="true">
        <linearGradient id="folderGrey" x1="0" y1="0" x2="1" y2="1">
          <stop offset="0" stopColor="#fafafa" />
          <stop offset="1" stopColor="#808080" />
        </linearGradient>
      </svg>

      <header className="flex h-[22px] shrink-0 items-center overflow-hidden border-t border-[#484848] bg-linear-to-b from-[#b9c8d8] to-[#d6e3f0] font-['Open_Sans',sans-serif] text-[13px] text-[#505050]">
        <Icon name="logo" />
        <h1 className="ml-[5px] flex-1">PowerDesigner - [CDM SchoolConceptualDataModel, Diagram_1]</h1>
        <div className="-mr-2 flex gap-[2px]">
          <WindowButton kind="min" className="border-[#8090a8]" />
          <WindowButton kind="restore" className="border-[#8090a8]" />
        </div>
      </header>

      <nav className="flex h-5 shrink-0 items-center border-b-2 border-[#b4bcd0] bg-linear-to-b from-white to-[#d8def2] font-['Noto_Sans',sans-serif] text-[12px] text-[#6c6c6c]">
        <Icon name="model" className="ml-px size-4" />
        <div className="flex flex-1 gap-[15px] pt-px pl-2">
          {menus.map(m => (
            <button key={m} type="button">{m}</button>
          ))}
        </div>
        <button type="button" aria-label="Minimize document" className="flex h-[17px] w-[14px] items-end justify-center border border-r-0 border-[#9cacc4] bg-[#dce8f8] pb-1">
          <span className="h-[2px] w-[6px] bg-[#707880]" />
        </button>
      </nav>

      <div className="flex h-8 shrink-0 items-center border-t border-b-2 border-t-[#a0a0a0] border-b-[#696969] pl-[221px]">
        {toolbars.map((items, i) => (
          <div key={i} className="flex h-[27px] items-center border-r border-[#a0a0a0] pr-[3px]">
            <span className="mr-[2px] h-[25px] w-[6px] border-x-2 border-[#c0c0c0] bg-white" />
            <Tools items={items} />
          </div>
        ))}
      </div>

      <main className="flex min-h-0 flex-1">
        <WorkspaceTree />
        <div className="relative flex min-w-0 flex-1 flex-col pb-[6px]">
          <div className="flex-1 bg-white">
            <div className="ml-[356px] h-full w-[685px] border-x border-black pt-7 text-center">
              <p className="ml-[-44px] text-[16px] leading-6">学生教师班级数据模型</p>
            </div>
          </div>
          <div className="flex h-[17px] items-center bg-[#ebebeb]">
            <button type="button" aria-label="Scroll left" className="flex w-4 items-center justify-center"><Arrow dir="left" /></button>
            <span className="ml-[643px] flex h-4 w-[77px] items-center justify-center rounded-xs border border-[#989898] bg-linear-to-b from-[#f2f2f2] from-50% to-[#c8c8ca] text-[#505050]"><Grip /></span>
          </div>
          <EntityDialog />
          <Palette />
        </div>
      </main>

      <footer className="flex h-16 shrink-0 border-t-2 border-black">
        <div className="flex w-[13px] shrink-0 flex-col items-start gap-[2px] pt-[3px]">
          <button type="button" aria-label="Close output" className="flex h-3 w-[10px] items-center justify-center border-r border-b border-[#696969]">
            <svg viewBox="0 0 7 7" className="size-[7px]" aria-hidden="true"><path d="M0 1l7 5M7 1L0 6" stroke="#000" strokeWidth="1.800" /></svg>
          </button>
          <button type="button" aria-label="Collapse output" className="flex h-3 w-[10px] items-center justify-center border-r border-b border-[#696969] text-[#909090]"><Arrow dir="left" /></button>
          <span className="ml-[2px] w-[6px] flex-1 border-x border-[#a0a0a0] bg-white" />
        </div>
        <div className="mt-[2px] flex-1 border-t-2 border-l-2 border-[#696969] bg-white" />
      </footer>
    </div>
  )
}
